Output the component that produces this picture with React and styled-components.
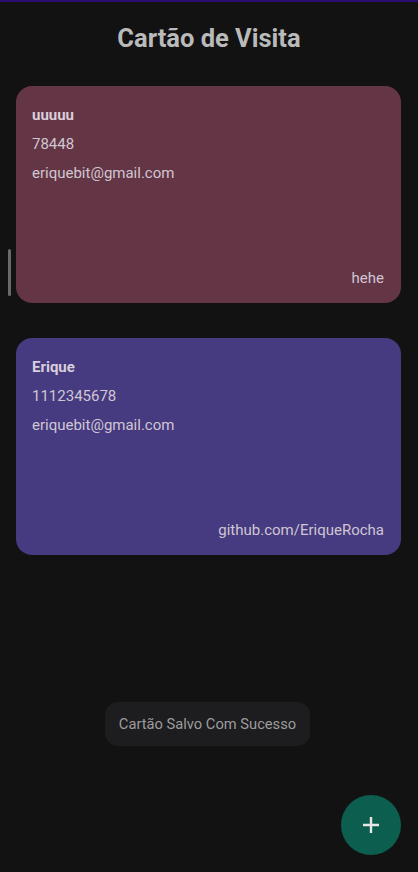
import styled, { createGlobalStyle } from 'styled-components'

const GlobalStyle = createGlobalStyle`
  html, body {
    margin: 0;
    padding: 0;
    background: #121212;
  }
  body {
    font-family: Roboto, 'Liberation Sans', sans-serif;
  }
`

const cards = [
  {
    id: 1,
    name: 'uuuuu',
    phone: '78448',
    email: 'eriquebit@gmail.com',
    site: 'hehe',
    color: '#643545',
  },
  {
    id: 2,
    name: 'Erique',
    phone: '1112345678',
    email: 'eriquebit@gmail.com',
    site: 'github.com/EriqueRocha',
    color: '#463a80',
  },
]

const App = () => {
  return (
    <>
      <GlobalStyle />
      <Screen>
        <Title>Cartão de Visita</Title>
        <List>
          {cards.map((card) => (
            <Card key={card.id} $bg={card.color}>
              <Name>{card.name}</Name>
              <Line>{card.phone}</Line>
              <Line>{card.email}</Line>
              <Site>{card.site}</Site>
            </Card>
          ))}
        </List>
        <ScrollThumb />
        <Toast>Cartão Salvo Com Sucesso</Toast>
        <Fab aria-label='Adicionar'>
          <svg width='20' height='20' viewBox='0 0 20 20'>
            <path d='M10 2v16M2 10h16' stroke='#e6e6e6' strokeWidth='2.4' />
          </svg>
        </Fab>
      </Screen>
    </>
  )
}

const Screen = styled.div`
  position: relative;
  width: 418px;
  height: 872px;
  box-sizing: border-box;
  border-top: 2px solid #2a0d6e;
  background: #121212;
  overflow: hidden;
`

const Title = styled.h1`
  margin: 0;
  padding-top: 20px;
  height: 32px;
  line-height: 32px;
  text-align: center;
  font-size: 25.5px;
  font-weight: 700;
  color: #bababa;
`

const List = styled.div`
  display: flex;
  flex-direction: column;
  gap: 35px;
  padding: 32px 17px 0 16px;
`

const Card = styled.div`
  display: flex;
  flex-direction: column;
  height: 217px;
  box-sizing: border-box;
  padding: 15px 17px 10px 16px;
  border-radius: 16px;
  background: ${(p) => p.$bg};
  color: #d0c6d2;
`

const Name = styled.div`
  font-size: 15px;
  font-weight: 700;
  line-height: 29px;
  color: #d9cfdb;
`

const Line = styled.div`
  font-size: 15px;
  line-height: 29px;
`

const Site = styled(Line)`
  margin-top: auto;
  text-align: right;
`

const ScrollThumb = styled.div`
  position: absolute;
  left: 8px;
  top: 247px;
  width: 3px;
  height: 47px;
  border-radius: 2px;
  background: #6a6a6a;
`

const Toast = styled.div`
  position: absolute;
  left: 105px;
  top: 700px;
  width: 205px;
  height: 44px;
  display: flex;
  align-items: center;
  justify-content: center;
  border-radius: 13px;
  background: #1d1d1f;
  color: #9c9c9c;
  font-size: 14.7px;
`

const Fab = styled.button`
  position: absolute;
  left: 341px;
  top: 793px;
  width: 60px;
  height: 60px;
  border: none;
  border-radius: 50%;
  background: #0c5e4e;
  display: flex;
  align-items: center;
  justify-content: center;
  padding: 0;
`

export default App
